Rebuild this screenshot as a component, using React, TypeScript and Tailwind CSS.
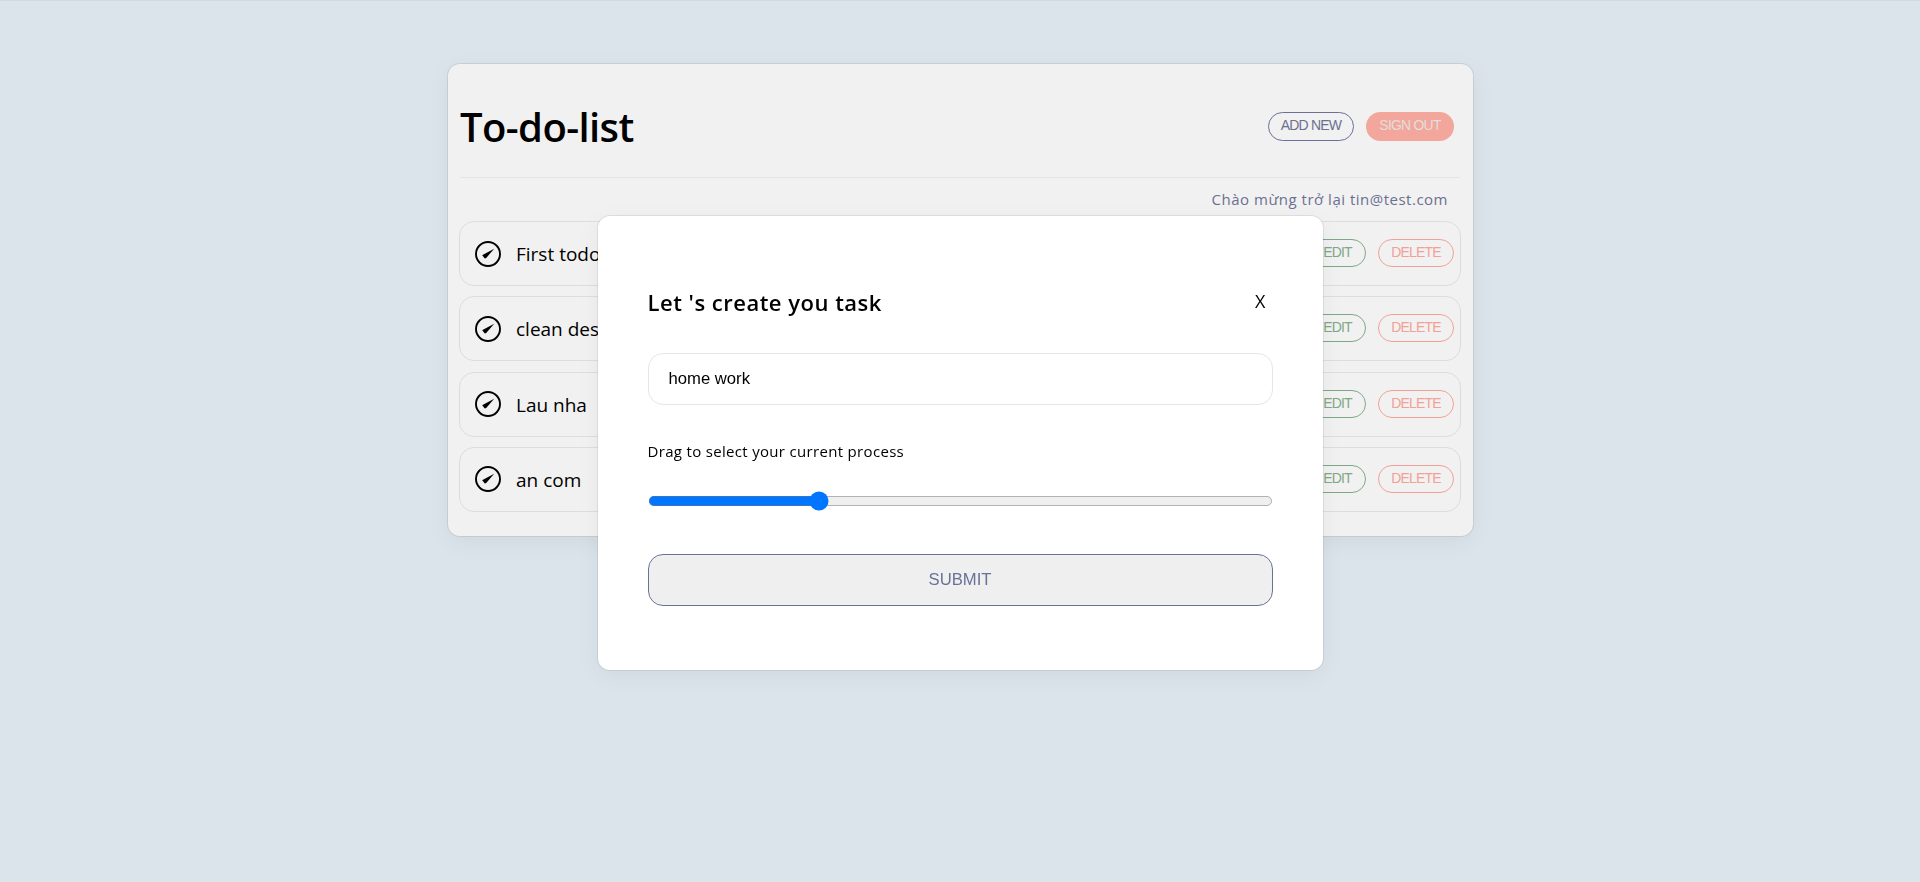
import { useState } from "react";

const tasks = ["First todo", "clean desk", "Lau nha", "an com"];

function TickIcon() {
  return (
    <svg viewBox="0 0 26 26" className="h-[26px] w-[26px] shrink-0" fill="none">
      <circle cx="13" cy="13" r="12" stroke="#000" strokeWidth="1.9" />
      <path d="M7.2 14.2 9.4 12.9 19.2 7.8 11.2 16.9 9.8 17.6Z" fill="#000" />
    </svg>
  );
}

function Task({ title }: { title: string }) {
  return (
    <li className="mx-[-1px] mb-[10.33px] flex h-[65px] items-center rounded-[15px] border border-[#dddddd] pl-[15px] pr-[6px]">
      <TickIcon />
      <span className="ml-[15px] mt-px font-['Open_Sans',sans-serif] text-[19px] leading-6">{title}</span>
      <div className="-mt-px ml-auto flex gap-3 font-['Liberation_Sans',sans-serif] text-[14px] tracking-[-0.85px]">
        <button className="h-[28px] w-[60px] rounded-full border border-[#7fa886] pb-px pl-[4px] text-[#7fa886]">EDIT</button>
        <button className="h-[28px] w-[76px] rounded-full border border-[#f3a096] pb-px pl-px text-[#f3a096]">DELETE</button>
      </div>
    </li>
  );
}

function Modal() {
  const [name, setName] = useState("home work");
  const [progress, setProgress] = useState(26.7);
  return (
    <div className="fixed inset-0 flex items-start justify-center pt-[216px]">
      <div className="h-[454px] w-[725px] rounded-[12px] bg-white px-[50px] pt-[69px] shadow-[0_6px_24px_0_rgba(0,0,0,0.05),0_0_0_1px_rgba(0,0,0,0.08)]">
        <div className="flex h-[34px] items-center justify-between">
          <h3 className="font-['Open_Sans',sans-serif] text-[22px] font-semibold tracking-[0.5px]">
            Let 's create you task
          </h3>
          <button className="-mt-px mr-[7px] font-['Open_Sans',sans-serif] text-[18px]">X</button>
        </div>
        <form onSubmit={(e) => e.preventDefault()}>
          <input
            value={name}
            onChange={(e) => setName(e.target.value)}
            className="mt-[34px] block h-[52px] w-full rounded-[15px] border border-[#e6e6e6] px-5 pb-px font-['Liberation_Sans',sans-serif] text-[16.67px] outline-none"
          />
          <label className="mt-[34px] block h-6 font-['Open_Sans',sans-serif] text-[15px] leading-6 tracking-[0.32px]">
            Drag to select your current process
          </label>
          <input
            type="range"
            min="0"
            max="100"
            step="0.1"
            value={progress}
            onChange={(e) => setProgress(Number(e.target.value))}
            className="mx-0 mt-[22.4px] block h-4 w-full [zoom:1.25]"
          />
          <button className="mt-[43px] block h-[52px] w-full rounded-[15px] border border-[#6b7299] bg-[#efefef] pb-px font-['Liberation_Sans',sans-serif] text-[16.67px] text-[#6b7299]">
            SUBMIT
          </button>
        </form>
      </div>
    </div>
  );
}

export default function App() {
  return (
    <div className="min-h-screen border-t border-[#d3d9dd] bg-[#dce4eb] pt-[63px] text-black">
      <main className="mx-auto h-[472px] w-[1025px] rounded-[12px] bg-[#f1f1f1] pl-[12.5px] pr-[13px] shadow-[0_6px_24px_0_rgba(0,0,0,0.05),0_0_0_1px_rgba(0,0,0,0.08)]">
        <header className="flex h-[114px] items-center justify-between border-b border-[#e4e4e4] pt-[12px]">
          <h1 className="font-['Open_Sans',sans-serif] text-[40px] font-semibold tracking-[-0.6px]">To-do-list</h1>
          <div className="mr-[6px] flex gap-3 font-['Liberation_Sans',sans-serif] text-[14px] tracking-[-0.8px]">
            <button className="h-[29px] w-[86px] rounded-full border border-[#6b7099] pb-[2px] pl-px text-[#6b7090]">ADD NEW</button>
            <button className="h-[29px] w-[88px] rounded-full bg-[#f3a69b] pb-[2px] pl-px text-[#e1dedd]">SIGN OUT</button>
          </div>
        </header>
        <p className="h-[43px] pr-[11.5px] pt-[9px] text-right font-['Open_Sans',sans-serif] text-[15px] leading-6 tracking-[0.5px] text-[#6b7090]">
          Chào mừng trở lại tin@test.com
        </p>
        <ul>
          {tasks.map((title) => (
            <Task key={title} title={title} />
          ))}
        </ul>
      </main>
      <Modal />
    </div>
  );
}
